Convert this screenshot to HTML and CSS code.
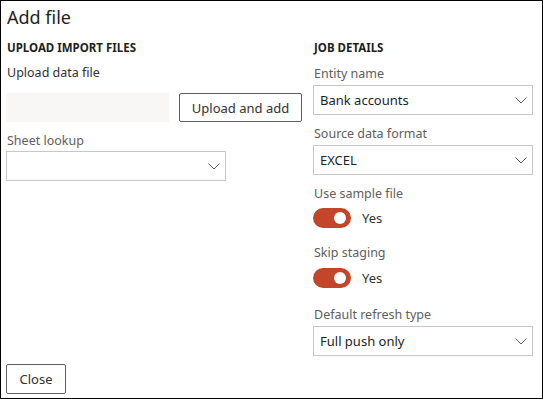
FILE: index.html
```html
<!DOCTYPE html>
<html lang="en">
<head>
  <meta charset="UTF-8" />
  <title>Add file</title>
  <link rel="stylesheet" href="styles.css">
</head>
<body>
  <div class="dialog">
    <h1 class="title">Add file</h1>

    <div class="columns">
      <section class="col col-left">
        <h2 class="section-head">UPLOAD IMPORT FILES</h2>
        <div class="label label-dark">Upload data file</div>
        <div class="upload-row">
          <div class="file-box"></div>
          <button class="btn btn-upload">Upload and add</button>
        </div>
        <div class="label label-sheet">Sheet lookup</div>
        <div class="select select-left">
          <span class="select-value"></span>
          <svg class="chev" width="12" height="7" viewBox="0 0 12 7"><path d="M0.5 0.5 L6 6 L11.5 0.5" fill="none" stroke="#605e5c" stroke-width="1"/></svg>
        </div>
      </section>

      <section class="col col-right">
        <h2 class="section-head">JOB DETAILS</h2>
        <div class="label label-first">Entity name</div>
        <div class="select">
          <span class="select-value">Bank accounts</span>
          <svg class="chev" width="12" height="7" viewBox="0 0 12 7"><path d="M0.5 0.5 L6 6 L11.5 0.5" fill="none" stroke="#605e5c" stroke-width="1"/></svg>
        </div>

        <div class="label label-next">Source data format</div>
        <div class="select">
          <span class="select-value">EXCEL</span>
          <svg class="chev" width="12" height="7" viewBox="0 0 12 7"><path d="M0.5 0.5 L6 6 L11.5 0.5" fill="none" stroke="#605e5c" stroke-width="1"/></svg>
        </div>

        <div class="label label-next label-toggle">Use sample file</div>
        <div class="toggle-row">
          <span class="toggle"><span class="knob"></span></span>
          <span class="toggle-text">Yes</span>
        </div>

        <div class="label label-skip label-toggle">Skip staging</div>
        <div class="toggle-row">
          <span class="toggle"><span class="knob"></span></span>
          <span class="toggle-text">Yes</span>
        </div>

        <div class="label label-refresh">Default refresh type</div>
        <div class="select">
          <span class="select-value">Full push only</span>
          <svg class="chev" width="12" height="7" viewBox="0 0 12 7"><path d="M0.5 0.5 L6 6 L11.5 0.5" fill="none" stroke="#605e5c" stroke-width="1"/></svg>
        </div>
      </section>
    </div>

    <div class="footer">
      <button class="btn btn-close">Close</button>
    </div>
  </div>
</body>
</html>
```

FILE: styles.css
```css
* {
  box-sizing: border-box;
}

body {
  margin: 0;
  background: #fff;
  font-family: 'Noto Sans', 'Open Sans', sans-serif;
  color: #323130;
}

.dialog {
  width: 543px;
  height: 399px;
  border: 1px solid #000;
  display: flex;
  flex-direction: column;
  padding: 0 10px 4px 5px;
}

.title {
  margin: 0;
  margin-top: 3px;
  font-size: 18px;
  font-weight: 400;
  line-height: 26px;
  color: #201f1e;
  padding-left: 1px;
}

.columns {
  display: grid;
  grid-template-columns: 297px 220px;
  column-gap: 10px;
  margin-top: 10px;
}

.col {
  display: flex;
  flex-direction: column;
}

.section-head {
  margin: 0;
  font-size: 11.5px;
  font-weight: 700;
  line-height: 16px;
  color: #201f1e;
  padding-left: 1px;
}

.label {
  font-size: 12.5px;
  line-height: 16px;
  color: #605e5c;
  margin-top: 9px;
  margin-bottom: 3px;
  padding-left: 1px;
}

.label-first {
  margin-top: 10px;
}

.label-dark {
  color: #323130;
  margin-top: 9px;
  margin-bottom: 12px;
}

.label-next {
  margin-top: 11px;
}

.label-toggle {
  margin-bottom: 6px;
}

.label-skip {
  margin-top: 17px;
  margin-bottom: 7px;
}

.label-refresh {
  margin-top: 19px;
}

.label-sheet {
  margin-top: 11px;
  margin-bottom: 2px;
}

.upload-row {
  display: flex;
  align-items: stretch;
  gap: 10px;
  height: 29px;
}

.file-box {
  width: 163px;
  background: #f8f7f6;
}

.btn {
  font-family: inherit;
  font-size: 13px;
  color: #323130;
  background: #fff;
  border: 1px solid #605e5c;
  border-radius: 2px;
  padding: 0 10px;
  height: 30px;
  white-space: nowrap;
  cursor: pointer;
}

.btn-upload {
  width: 123px;
  height: 29px;
  padding: 0;
}

.select {
  height: 30px;
  border: 1px solid #c8c6c4;
  display: flex;
  align-items: center;
  justify-content: space-between;
  padding: 0 5px 0 6px;
  font-size: 13px;
  color: #201f1e;
}

.select-left {
  width: 220px;
}

.chev {
  display: block;
}

.toggle-row {
  display: flex;
  align-items: center;
  gap: 11px;
  height: 20px;
}

.toggle {
  width: 38px;
  height: 20px;
  border-radius: 10px;
  background: #c3462a;
  position: relative;
}

.knob {
  position: absolute;
  top: 4px;
  right: 5px;
  width: 12px;
  height: 12px;
  border-radius: 50%;
  background: #fff;
}

.toggle-text {
  font-size: 13px;
  color: #323130;
}

.footer {
  margin-top: auto;
}

.btn-close {
  width: 60px;
  padding: 0;
}
```
